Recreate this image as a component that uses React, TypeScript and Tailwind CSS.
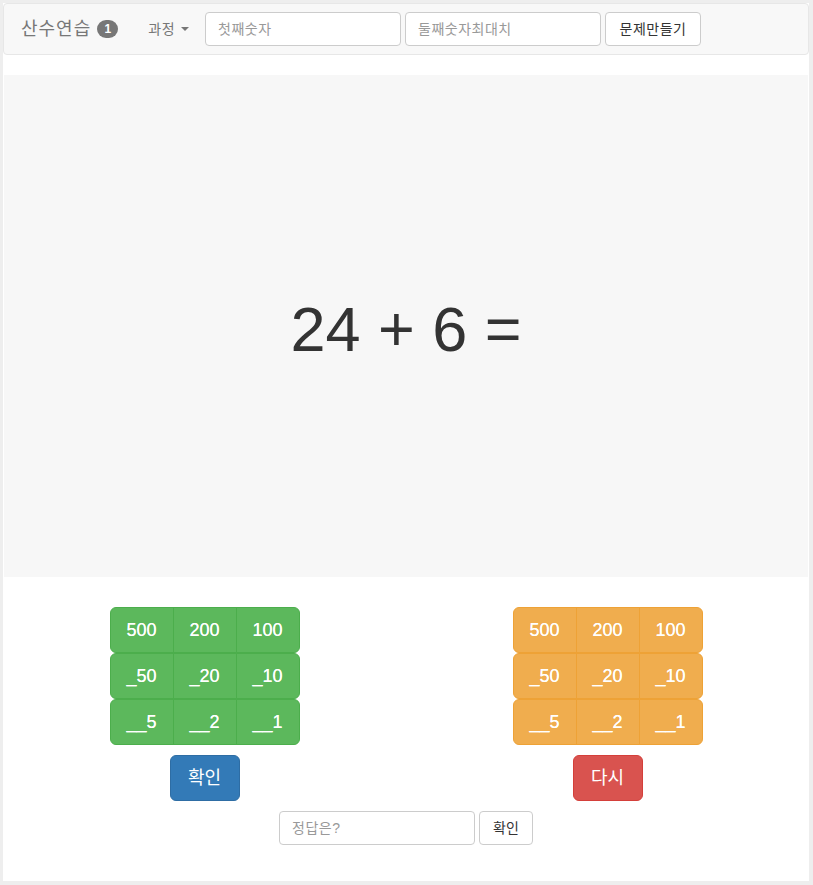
import React from "react";

const F = { fontFamily: '"Liberation Sans", "Noto Sans CJK KR", sans-serif' };

function Grid({ color }: { color: "green" | "orange" }) {
  const rows = [
    ["500", "200", "100"],
    ["_50", "_20", "_10"],
    ["__5", "__2", "__1"],
  ];
  const cell =
    color === "green"
      ? "bg-[#5cb85c] border-[#4cae4c]"
      : "bg-[#f0ad4e] border-[#eea236]";
  return (
    <div className="flex flex-col w-[190px]">
      {rows.map((r, i) => (
        <div key={i} className="flex">
          {r.map((t, j) => (
            <div
              key={j}
              className={`${cell} border text-white text-[18px] leading-[24px] h-[46px] py-[10px] flex-1 text-center [text-shadow:0_0_0.4px_#fff] ${
                j === 0 ? "rounded-l-[6px]" : "-ml-px"
              } ${j === 2 ? "rounded-r-[6px]" : ""}`}
            >
              {t}
            </div>
          ))}
        </div>
      ))}
    </div>
  );
}

export default function App() {
  return (
    <div style={F} className="bg-[#eeeeee] w-[813px] h-[885px] pt-[3px] pl-[3px] pr-[4px] text-[#333]">
      <div className="bg-white h-[878px] flex flex-col">
        <div className="h-[52px] bg-[#f8f8f8] border border-[#e7e7e7] rounded-[4px] flex items-center px-[17px]">
          <span className="text-[18px] text-[#777] tracking-[1px]">산수연습</span>
          <span className="ml-[6px] bg-[#777] text-white text-[12px] font-bold rounded-full w-[21px] h-[18px] flex items-center justify-center">1</span>
          <span className="ml-[30px] text-[14px] text-[#777] flex items-center tracking-[0.5px]">
            과정
            <span className="ml-[6px] w-0 h-0 border-l-[4px] border-r-[4px] border-t-[4px] border-l-transparent border-r-transparent border-t-[#777]" />
          </span>
          <input
            className="ml-[16px] w-[196px] h-[34px] border border-[#ccc] rounded-[4px] px-[12px] text-[14px] tracking-[0.5px] placeholder:text-[#999] bg-white outline-none"
            placeholder="첫째숫자"
          />
          <input
            className="ml-[4px] w-[196px] h-[34px] border border-[#ccc] rounded-[4px] px-[12px] text-[14px] tracking-[0.5px] placeholder:text-[#999] bg-white outline-none"
            placeholder="둘째숫자최대치"
          />
          <button className="ml-[4px] h-[34px] w-[96px] border border-[#ccc] rounded-[4px] bg-white text-[14px] text-[#333] tracking-[0.5px]">
            문제만들기
          </button>
        </div>
        <div className="mt-[20px] mx-[1px] h-[502px] bg-[#f7f7f7] flex items-center justify-center">
          <div className="text-[63px] text-[#333] pt-[6px]">24 + 6 =</div>
        </div>
        <div className="flex mt-[30px]">
          <div className="flex-1 flex flex-col items-center">
            <Grid color="green" />
            <button className="mt-[10px] w-[70px] h-[46px] bg-[#337ab7] border border-[#2e6da4] rounded-[6px] text-white text-[18px]">
              확인
            </button>
          </div>
          <div className="flex-1 flex flex-col items-center">
            <Grid color="orange" />
            <button className="mt-[10px] w-[70px] h-[46px] bg-[#d9534f] border border-[#d43f3a] rounded-[6px] text-white text-[18px]">
              다시
            </button>
          </div>
        </div>
        <div className="flex justify-center mt-[10px] gap-[4px]">
          <input
            className="w-[196px] h-[34px] border border-[#ccc] rounded-[4px] px-[12px] text-[14px] tracking-[0.5px] placeholder:text-[#999] bg-white outline-none"
            placeholder="정답은?"
          />
          <button className="h-[34px] w-[54px] border border-[#ccc] rounded-[4px] bg-white text-[14px] text-[#333]">
            확인
          </button>
        </div>
      </div>
    </div>
  );
}
